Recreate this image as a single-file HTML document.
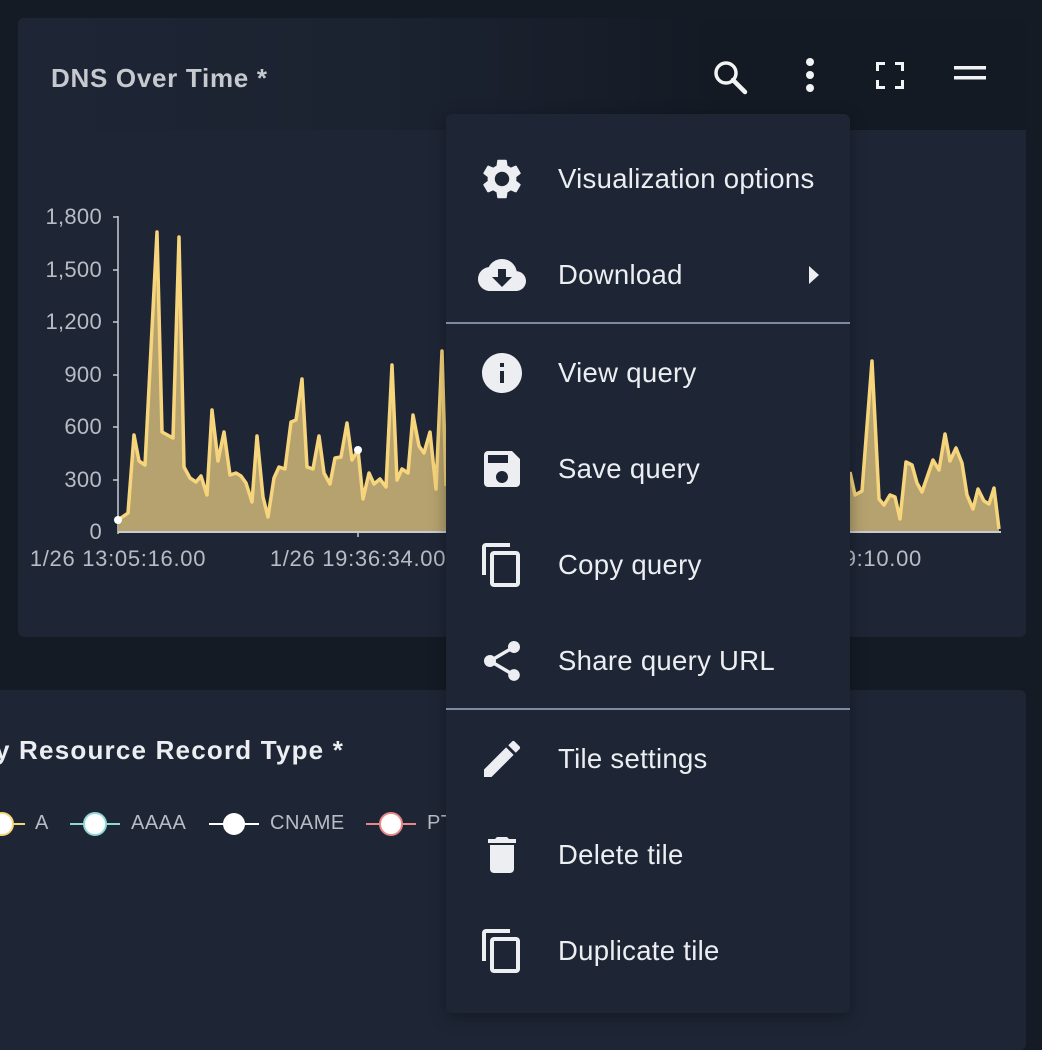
<!DOCTYPE html>
<html><head><meta charset="utf-8"><style>
*{margin:0;padding:0;box-sizing:border-box}
body{width:1042px;height:1030px;background:#151b25;font-family:"Liberation Sans",Roboto,sans-serif;position:relative;overflow:hidden}
.card1{position:absolute;left:18px;top:18px;width:1008px;height:619px;background:#1e2636;border-radius:6px;overflow:hidden}
.hdr{position:absolute;left:0;top:0;width:1008px;height:112px;background:linear-gradient(90deg,#1e2636 0%,#1a212e 45%,#141a24 70%,#141a24 100%)}
.title1{position:absolute;left:33px;top:45px;font-size:26px;font-weight:bold;color:#c6c9ce;letter-spacing:0.7px}
.card2{position:absolute;left:-10px;top:690px;width:1036px;height:360px;background:#1e2636;border-radius:6px}
.title2{position:absolute;left:-25px;top:735px;font-size:26px;font-weight:bold;color:#eceef1;white-space:nowrap;letter-spacing:1.2px}
.menu{position:absolute;left:446px;top:114px;width:404px;height:899px;background:#1e2636;border-radius:6px;box-shadow:0 4px 16px rgba(0,0,0,.35)}
.item{position:absolute;left:0;width:404px;height:96px}
.item svg{position:absolute;left:32px;top:24px}
.item span{position:absolute;left:112px;top:32px;font-size:27.5px;color:#eceef1;letter-spacing:0.3px;white-space:nowrap}
.div{position:absolute;left:0;width:404px;height:2px;background:#7d8aa3}
.lg{position:absolute;top:812px;font-size:20px;color:#b8bcc4;letter-spacing:.5px}
</style></head><body>
<div class="card1"><div class="hdr"></div><div class="title1">DNS Over Time *</div></div>

<svg style="position:absolute;left:0;top:0" width="1042" height="640">
 <g fill="#f2f3f5">
  <circle cx="726" cy="73" r="10" fill="none" stroke="#f2f3f5" stroke-width="3.5"/>
  <path d="M733 80 L745 92" stroke="#f2f3f5" stroke-width="4.5" stroke-linecap="round"/>
  <circle cx="810" cy="62" r="4"/><circle cx="810" cy="75" r="4"/><circle cx="810" cy="88" r="4"/>
  <path d="M876 62h9v3h-6v6h-3zM895 62h9v9h-3v-6h-6zM876 80h3v6h6v3h-9zM901 80h3v9h-9v-3h6z"/>
  <rect x="954" y="66" width="32" height="3.5"/><rect x="954" y="76" width="32" height="3.5"/>
 </g>
 <g font-size="22" fill="#b8bcc4" text-anchor="end" font-family="Liberation Sans,sans-serif" letter-spacing="0.3">
  <text x="102" y="224">1,800</text><text x="102" y="277">1,500</text><text x="102" y="329">1,200</text>
  <text x="102" y="382">900</text><text x="102" y="434">600</text><text x="102" y="487">300</text><text x="102" y="539">0</text>
 </g>
 <g stroke="#c8cbd0" stroke-width="1.5">
  <line x1="118" y1="216" x2="118" y2="534"/>
  <line x1="113" y1="217" x2="118" y2="217"/><line x1="113" y1="270" x2="118" y2="270"/><line x1="113" y1="322" x2="118" y2="322"/><line x1="113" y1="375" x2="118" y2="375"/><line x1="113" y1="427" x2="118" y2="427"/><line x1="113" y1="480" x2="118" y2="480"/>
  <line x1="358" y1="531" x2="358" y2="537"/>
 </g>
 <polygon fill="#b5a26f" points="118,532 118,520 128,513 134,435 139,461 145,465 157,232 162,432 173,438 179,237 184,467 190,478 196,482 201,476 207,495 212,410 218,461 224,432 230,475 236,473 241,476 246,483 252,502 257,436 263,497 268,517 274,478 279,467 285,469 291,422 296,420 302,379 307,467 313,469 319,436 324,473 330,484 335,458 341,457 347,423 352,460 358,450 363,499 369,473 374,484 380,479 386,487 392,365 397,480 402,469 408,473 413,415 419,446 424,453 430,432 436,489 442,351 446,486 850,472 855,495 862,491 872,361 879,499 884,505 890,495 895,497 900,519 906,462 912,465 917,483 922,492 933,460 939,470 945,434 950,461 956,448 962,463 967,495 973,509 978,489 984,501 989,504 994,488 999,529 999,532"/>
 <polyline fill="none" stroke="#f7d57c" stroke-width="3.5" stroke-linejoin="round" points="118,520 128,513 134,435 139,461 145,465 157,232 162,432 173,438 179,237 184,467 190,478 196,482 201,476 207,495 212,410 218,461 224,432 230,475 236,473 241,476 246,483 252,502 257,436 263,497 268,517 274,478 279,467 285,469 291,422 296,420 302,379 307,467 313,469 319,436 324,473 330,484 335,458 341,457 347,423 352,460 358,450 363,499 369,473 374,484 380,479 386,487 392,365 397,480 402,469 408,473 413,415 419,446 424,453 430,432 436,489 442,351 446,486"/>
 <polyline fill="none" stroke="#f7d57c" stroke-width="3.5" stroke-linejoin="round" points="850,472 855,495 862,491 872,361 879,499 884,505 890,495 895,497 900,519 906,462 912,465 917,483 922,492 933,460 939,470 945,434 950,461 956,448 962,463 967,495 973,509 978,489 984,501 989,504 994,488 999,529"/>
 <line x1="118" y1="532" x2="1001" y2="532" stroke="#c8cbd0" stroke-width="2"/>
 <circle cx="118" cy="520" r="4" fill="#fff"/><circle cx="358" cy="450" r="4" fill="#fff"/>
 <g font-size="22" fill="#b8bcc4" font-family="Liberation Sans,sans-serif" letter-spacing="0.7">
  <text x="118" y="566" text-anchor="middle">1/26 13:05:16.00</text>
  <text x="358" y="566" text-anchor="middle">1/26 19:36:34.00</text>
  <text x="922" y="566" text-anchor="end">1/26 02:09:10.00</text>
 </g>
</svg>

<div class="card2"></div>
<div class="title2">By Resource Record Type *</div>
<svg style="position:absolute;left:0;top:800px" width="460" height="50">
 <line x1="0" y1="24" x2="25" y2="24" stroke="#f7d57c" stroke-width="2"/><circle cx="2" cy="24" r="11" fill="#fff" stroke="#f7d57c" stroke-width="2"/>
 <line x1="70" y1="24" x2="120" y2="24" stroke="#8fd8d4" stroke-width="2"/><circle cx="95" cy="24" r="11" fill="#fff" stroke="#8fd8d4" stroke-width="2"/>
 <line x1="209" y1="24" x2="259" y2="24" stroke="#fff" stroke-width="2"/><circle cx="234" cy="24" r="11" fill="#fff"/>
 <line x1="366" y1="24" x2="416" y2="24" stroke="#e8878a" stroke-width="2"/><circle cx="391" cy="24" r="11" fill="#fff" stroke="#e8878a" stroke-width="2"/>
</svg>
<div class="lg" style="left:35px">A</div>
<div class="lg" style="left:131px">AAAA</div>
<div class="lg" style="left:270px">CNAME</div>
<div class="lg" style="left:427px">PTR</div>

<div class="menu">
 <div class="item" style="top:17px"><svg width="48" height="48" viewBox="0 0 24 24" fill="#eceef1"><path d="M19.14 12.94c.04-.3.06-.61.06-.94 0-.32-.02-.64-.07-.94l2.03-1.58a.49.49 0 0 0 .12-.61l-1.92-3.32a.488.488 0 0 0-.59-.22l-2.39.96c-.5-.38-1.03-.7-1.62-.94l-.36-2.54a.484.484 0 0 0-.48-.41h-3.84c-.24 0-.43.17-.47.41l-.36 2.54c-.59.24-1.13.57-1.62.94l-2.39-.96c-.22-.08-.47 0-.59.22L2.74 8.87c-.12.21-.08.47.12.61l2.03 1.58c-.05.3-.09.63-.09.94s.02.64.07.94l-2.03 1.58a.49.49 0 0 0-.12.61l1.92 3.32c.12.22.37.29.59.22l2.39-.96c.5.38 1.03.7 1.62.94l.36 2.54c.05.24.24.41.48.41h3.84c.24 0 .44-.17.47-.41l.36-2.54c.59-.24 1.13-.56 1.62-.94l2.39.96c.22.08.47 0 .59-.22l1.92-3.32c.12-.22.07-.47-.12-.61l-2.01-1.58zM12 15.6c-1.98 0-3.6-1.62-3.6-3.6s1.62-3.6 3.6-3.6 3.6 1.62 3.6 3.6-1.62 3.6-3.6 3.6z"/></svg><span>Visualization options</span></div>
 <div class="item" style="top:113px"><svg width="48" height="48" viewBox="0 0 24 24" fill="#eceef1"><path d="M19.35 10.04A7.49 7.49 0 0 0 12 4C9.11 4 6.6 5.64 5.35 8.04A5.994 5.994 0 0 0 0 14c0 3.31 2.69 6 6 6h13c2.76 0 5-2.24 5-5 0-2.64-2.05-4.78-4.65-4.96zM17 13l-5 5-5-5h3V9h4v4h3z"/></svg><span>Download</span>
  <svg style="left:362px;top:38px" width="12" height="20" viewBox="0 0 12 20"><path d="M1 1l10 9-10 9z" fill="#eceef1"/></svg></div>
 <div class="div" style="top:208px"></div>
 <div class="item" style="top:211px"><svg width="48" height="48" viewBox="0 0 24 24" fill="#eceef1"><path d="M12 2C6.48 2 2 6.48 2 12s4.48 10 10 10 10-4.48 10-10S17.52 2 12 2zm1 15h-2v-6h2v6zm0-8h-2V7h2v2z"/></svg><span>View query</span></div>
 <div class="item" style="top:307px"><svg width="48" height="48" viewBox="0 0 24 24" fill="#eceef1"><path d="M17 3H5a2 2 0 0 0-2 2v14a2 2 0 0 0 2 2h14c1.1 0 2-.9 2-2V7l-4-4zm-5 16c-1.66 0-3-1.34-3-3s1.34-3 3-3 3 1.34 3 3-1.34 3-3 3zm3-10H5V5h10v4z"/></svg><span>Save query</span></div>
 <div class="item" style="top:403px"><svg width="48" height="48" viewBox="0 0 24 24" fill="#eceef1"><path d="M16 1H4c-1.1 0-2 .9-2 2v14h2V3h12V1zm3 4H8c-1.1 0-2 .9-2 2v14c0 1.1.9 2 2 2h11c1.1 0 2-.9 2-2V7c0-1.1-.9-2-2-2zm0 16H8V7h11v14z"/></svg><span>Copy query</span></div>
 <div class="item" style="top:499px"><svg width="48" height="48" viewBox="0 0 24 24" fill="#eceef1"><path d="M18 16.08c-.76 0-1.44.3-1.96.77L8.91 12.7c.05-.23.09-.46.09-.7s-.04-.47-.09-.7l7.05-4.11c.54.5 1.25.81 2.04.81 1.66 0 3-1.34 3-3s-1.34-3-3-3-3 1.34-3 3c0 .24.04.47.09.7L8.04 9.81C7.5 9.31 6.79 9 6 9c-1.66 0-3 1.34-3 3s1.34 3 3 3c.79 0 1.5-.31 2.04-.81l7.12 4.16c-.05.21-.08.43-.08.65 0 1.61 1.31 2.92 2.92 2.92 1.61 0 2.92-1.31 2.92-2.92s-1.31-2.92-2.92-2.92z"/></svg><span>Share query URL</span></div>
 <div class="div" style="top:594px"></div>
 <div class="item" style="top:597px"><svg width="48" height="48" viewBox="0 0 24 24" fill="#eceef1"><path d="M3 17.25V21h3.75L17.81 9.94l-3.75-3.75L3 17.25zM20.71 7.04a.996.996 0 0 0 0-1.41l-2.34-2.34a.996.996 0 0 0-1.41 0l-1.83 1.83 3.75 3.75 1.83-1.83z"/></svg><span>Tile settings</span></div>
 <div class="item" style="top:693px"><svg width="48" height="48" viewBox="0 0 24 24" fill="#eceef1"><path d="M6 19c0 1.1.9 2 2 2h8c1.1 0 2-.9 2-2V7H6v12zM19 4h-3.5l-1-1h-5l-1 1H5v2h14V4z"/></svg><span>Delete tile</span></div>
 <div class="item" style="top:789px"><svg width="48" height="48" viewBox="0 0 24 24" fill="#eceef1"><path d="M16 1H4c-1.1 0-2 .9-2 2v14h2V3h12V1zm3 4H8c-1.1 0-2 .9-2 2v14c0 1.1.9 2 2 2h11c1.1 0 2-.9 2-2V7c0-1.1-.9-2-2-2zm0 16H8V7h11v14z"/></svg><span>Duplicate tile</span></div>
</div>
</body></html>
